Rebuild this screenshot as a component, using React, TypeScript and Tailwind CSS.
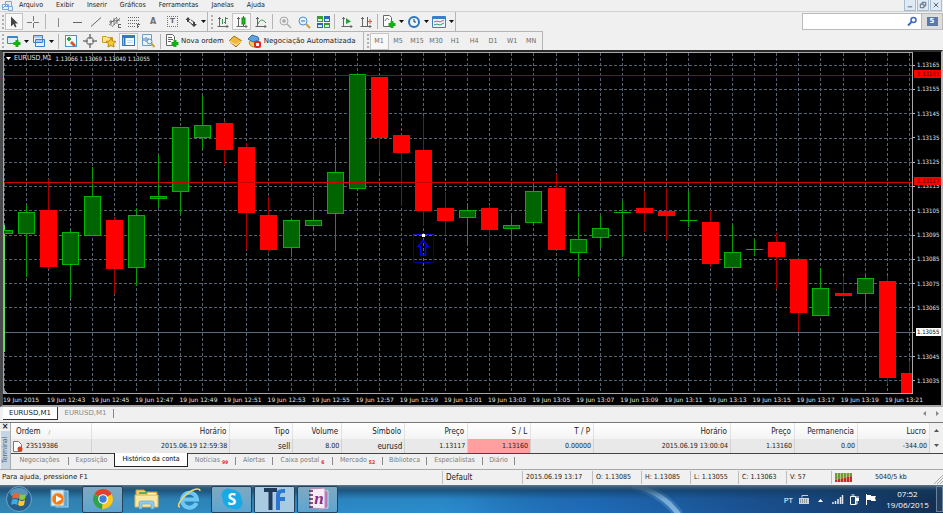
import React from "react";

type Kids = { children?: React.ReactNode };

const sans = "font-['DejaVu_Sans','Open_Sans',sans-serif]";
const narrow = "font-['DejaVu_Sans_Condensed','Open_Sans',sans-serif]";

/* ---------- toolbar pieces ---------- */

function Glyph({ children }: Kids) {
  return (
    <svg viewBox="0 0 14 14" className="h-[14px] w-[14px] shrink-0" fill="none" stroke="#666" strokeWidth="1">
      {children}
    </svg>
  );
}

function Tool({ label, w = "w-[19px]", pressed, caret, children }: Kids & { label: string; w?: string; pressed?: boolean; caret?: boolean }) {
  return (
    <button
      type="button"
      aria-label={label}
      className={`flex h-[17px] shrink-0 items-center justify-center gap-px ${w} ${pressed ? "border border-[#c4c4c4] bg-[#f8f8f8]" : ""}`}
    >
      <Glyph>{children}</Glyph>
      {caret && <Caret />}
    </button>
  );
}

function Caret() {
  return (
    <svg viewBox="0 0 5 3" className="ml-[2px] h-[3px] w-[5px] shrink-0">
      <path d="M0 0h5L2.500 3z" fill="#111" />
    </svg>
  );
}

function Sep() {
  return <span className="mx-[2px] h-[15px] w-px shrink-0 bg-[#b5b5b5]" />;
}

function Grip() {
  return <span className="mx-px h-[14px] w-[2px] shrink-0 border-l-2 border-dotted border-[#b0b0b0]" />;
}

const axes = <path d="M3.500 2v9.500M1.500 11.500h11M2 3.500h3M11 10v3" stroke="#666" />;
const plus = <path d="M10 6v7M6.500 9.500h7" stroke="#12b012" strokeWidth="3" />;

/* ---------- chart data ---------- */

type Candle = [dir: "up" | "down", high: number, top: number, bottom: number, low: number];

const candles: Candle[] = [
  ["up", 225, 230, 233, 352],
  ["up", 205, 212, 233, 277],
  ["down", 179, 210, 267, 269],
  ["up", 230, 232, 264, 298],
  ["up", 167, 196, 235, 235],
  ["down", 217, 220, 269, 294],
  ["up", 208, 215, 267, 286],
  ["up", 155, 196, 198, 208],
  ["up", 127, 127, 191, 214],
  ["up", 96, 125, 137, 149],
  ["down", 121, 123, 150, 165],
  ["down", 143, 147, 213, 250],
  ["down", 197, 215, 250, 252],
  ["up", 218, 220, 247, 257],
  ["up", 197, 220, 225, 229],
  ["up", 147, 172, 213, 248],
  ["up", 74, 74, 188, 189],
  ["down", 77, 77, 138, 173],
  ["down", 135, 135, 153, 206],
  ["down", 116, 150, 211, 226],
  ["down", 192, 208, 221, 235],
  ["up", 205, 210, 217, 244],
  ["down", 205, 208, 230, 248],
  ["up", 215, 225, 228, 240],
  ["up", 182, 191, 222, 223],
  ["down", 174, 188, 250, 250],
  ["up", 213, 239, 252, 277],
  ["up", 215, 228, 237, 248],
  ["up", 201, 212, 212, 257],
  ["down", 191, 208, 213, 232],
  ["down", 188, 211, 216, 240],
  ["up", 191, 220, 220, 227],
  ["down", 210, 222, 264, 267],
  ["up", 225, 252, 267, 267],
  ["up", 239, 249, 249, 256],
  ["down", 233, 242, 257, 289],
  ["down", 259, 259, 313, 332],
  ["up", 268, 288, 315, 316],
  ["down", 276, 293, 296, 297],
  ["up", 276, 278, 293, 309],
  ["down", 276, 281, 378, 384],
  ["down", 361, 373, 393, 393],
];

const prices = ["1.13165", "1.13155", "1.13145", "1.13135", "1.13125", "1.13115", "1.13105", "1.13095", "1.13085", "1.13075", "1.13065", "1.13055", "1.13045", "1.13035"];

const times = ["19 Jun 2015", "19 Jun 12:43", "19 Jun 12:45", "19 Jun 12:47", "19 Jun 12:49", "19 Jun 12:51", "19 Jun 12:53", "19 Jun 12:55", "19 Jun 12:57", "19 Jun 12:59", "19 Jun 13:01", "19 Jun 13:03", "19 Jun 13:05", "19 Jun 13:07", "19 Jun 13:09", "19 Jun 13:11", "19 Jun 13:13", "19 Jun 13:15", "19 Jun 13:17", "19 Jun 13:19", "19 Jun 13:21"];

const centre = (i: number) => Math.round(3.5 + i * 22.08);

function Body({ up, x, top, bottom }: { up: boolean; x: number; top: number; bottom: number }) {
  if (!up) return <rect x={x - 8} y={top} width="17" height={bottom - top} fill="#ff0000" />;
  if (top === bottom) return <rect x={x - 8} y={top} width="17" height="1" fill="#00b400" />;
  return (
    <>
      <rect x={x - 8} y={top} width="17" height={bottom - top + 1} fill="#00b400" />
      <rect x={x - 7} y={top + 1} width="15" height={bottom - top - 1} fill="#006400" />
    </>
  );
}

function Plot() {
  return (
    <svg viewBox="3 52 910 342" preserveAspectRatio="none" className="block h-full w-full" shapeRendering="crispEdges">
      <rect x="3" y="52" width="910" height="342" fill="#000" />
      <g stroke="#56626f" strokeDasharray="3 2">
        {candles.map((_, i) => (
          <line key={i} x1={centre(i) + 0.5} x2={centre(i) + 0.5} y1="53" y2="393" />
        ))}
        {prices.map((p, i) => {
          const y = Math.round(65 + i * 24.23) + 0.5;
          return <line key={p} x1="4" x2="912" y1={y} y2={y} />;
        })}
      </g>
      <path d="M4 332.500h908" stroke="#5d6c80" />
      {candles.map(([dir, high, top, bottom, low], i) => {
        const x = centre(i);
        const up = dir === "up";
        return (
          <g key={i}>
            <rect x={x} y={high} width="1" height={low - high} fill={i === 0 ? "#5fe05f" : up ? "#00a000" : "#a80000"} />
            <Body up={up} x={x} top={top} bottom={bottom} />
          </g>
        );
      })}
      <path d="M4 75.500h908" stroke="#a00000" />
      <path d="M4 182.500h908" stroke="#d00000" />
      <g fill="#0000a0">
        <rect x="413" y="234" width="1" height="28" />
        <rect x="433" y="234" width="1" height="28" />
        <rect x="413" y="262" width="21" height="1" />
        <rect x="413" y="234" width="21" height="1" fill="#1414e0" />
      </g>
      <path d="M423 240.500l5 6h-2.500v8.500h-5v-8.500H418z" fill="none" stroke="#0000ff" strokeWidth="1.500" shapeRendering="geometricPrecision" />
      <rect x="422" y="234" width="3" height="3" fill="#fff" />
      <path d="M3 389l4 4h-4z" fill="#8796ab" />
      <path d="M3 52.500h910M3.500 52v342M912.500 52v342M3 393.500h910" fill="none" stroke="#a8a8a8" />
    </svg>
  );
}

/* ---------- terminal ---------- */

const columns: [string, string][] = [
  ["Ordem", "w-[81px]"],
  ["Horário", "w-[138px]"],
  ["Tipo", "w-[63px]"],
  ["Volume", "w-[49px]"],
  ["Símbolo", "w-[63px]"],
  ["Preço", "w-[63px]"],
  ["S / L", "w-[63px]"],
  ["T / P", "w-[63px]"],
  ["Horário", "w-[137px]"],
  ["Preço", "w-[64px]"],
  ["Permanencia", "w-[63px]"],
  ["Lucro", "w-[72px]"],
];

const cells = ["2015.06.19 12:59:38", "sell", "8.00", "eurusd", "1.13117", "1.13160", "0.00000", "2015.06.19 13:00:04", "1.13160", "0.00", "-344.00"];

function SubTab({ children, count, w }: Kids & { count?: string; w: string }) {
  return (
    <button type="button" className={`flex h-[13px] shrink-0 items-center justify-between text-[#7c7c7c] ${w}`}>
      <span className="flex flex-1 items-center justify-center">
        {children}
        {count && <b className="ml-[2px] mt-[3px] text-[5px] text-[#f01818]">{count}</b>}
      </span>
      <i className="h-[8px] w-px bg-[#8a8a8a]" />
    </button>
  );
}

/* ---------- taskbar ---------- */

function TaskButton({ label, open, children, w = "w-[43px]" }: Kids & { label: string; open?: boolean; w?: string }) {
  return (
    <button type="button" aria-label={label} className={`flex h-[27px] shrink-0 items-center justify-center ${w}`}>
      <span className={`flex h-[27px] w-[41px] items-center justify-center overflow-hidden rounded-[2px] ${open ? "border border-[#24405a] bg-gradient-to-b from-[#7fa9c0] to-[#5ba5d0]" : ""}`}>
        <svg viewBox="0 0 26 26" className="h-[26px] w-[26px] overflow-visible">
          {children}
        </svg>
      </span>
    </button>
  );
}

export default function App() {
  return (
    <div className={`flex h-screen min-h-[400px] w-full flex-col overflow-hidden bg-[#f0f0f0] text-[7px] leading-[9px] text-[#222] ${sans}`}>
      {/* menu */}
      <header className="flex h-[12px] shrink-0 items-center border-b border-[#d2d2d2] pl-[2px]">
        <svg viewBox="0 0 12 10" className="h-[10px] w-[12px]" fill="#e6f0fb" stroke="#7ba6d6">
          <path d="M3.500.5h6v5h-6zM.5 3.500h6v5h-6z" />
          <path d="M6.500 5.500h4v4h-4z" />
          <path d="M1 7l2-2 1 1 2-2" fill="none" />
        </svg>
        <nav className={`flex items-center gap-[13px] pl-[5px] ${narrow}`}>
          {["Arquivo", "Exibir", "Inserir", "Gráficos", "Ferramentas", "Janelas", "Ajuda"].map((m) => (
            <button type="button" key={m}>{m}</button>
          ))}
        </nav>
        <div className="ml-auto flex gap-px pr-px">
          {["M3 7.500h5", "M4.500 5V2.500h4v4h-2M2.500 4.500h4v4h-4z", "M3 3l5 5M8 3l-5 5"].map((d, i) => (
            <button type="button" key={d} aria-label={["Minimizar", "Restaurar", "Fechar"][i]} className="h-[11px] w-[12px] border border-t-0 border-[#a9bccf] bg-[#dfeaf5]">
              <svg viewBox="0 0 11 11" className="h-[10px] w-[10px]" fill="none" stroke="#4c5d70">
                <path d={d} />
              </svg>
            </button>
          ))}
        </div>
      </header>

      {/* drawing toolbar */}
      <div className="flex h-[19px] shrink-0 items-center">
        <div className="flex h-full items-center border-r border-[#b5b5b5] pl-px">
          <Grip />
          <Tool label="Cursor" w="w-[18px]" pressed><path d="M4 1.500v10l2.500-2.500 1.500 3.500 1.500-1-1.500-3h3z" fill="#444" stroke="none" /></Tool>
          <Tool label="Cruz" w="w-[20px]"><path d="M7.500 1v12M1 7.500h13" stroke="#777" strokeDasharray="5 2" /></Tool>
          <Sep />
          <Tool label="Linha vertical"><path d="M7.500 3v9" stroke="#888" /></Tool>
          <Tool label="Linha horizontal"><path d="M3 7.500h9" /></Tool>
          <Tool label="Linha de tendência"><path d="M2 11.500l10-9" /></Tool>
          <Tool label="Canal"><path d="M1 10L9 2M4 12l8-9M3 5v6M6 3v7M9 3v6M1 7l11-2" strokeWidth=".8" /><path d="M10 9.500h3M10 12.500h3M10.500 9v4" /></Tool>
          <Tool label="Fibonacci"><path d="M1 2.500h11M1 5.500h11M1 8.500h11M1 11.500h7" strokeDasharray="1 1" /><path d="M10.500 9v4M10 9.500h3M10 11.500h2" /></Tool>
          <button type="button" className="w-[20px] text-[8px] font-bold text-[#707070]">A</button>
          <button type="button" className="flex w-[19px] justify-center text-[7px] font-bold text-[#666]"><span className="h-[11px] w-[11px] border border-dotted border-[#777]">T</span></button>
          <Tool label="Setas" w="w-[25px]" caret><path d="M4 2l2.500 3H5v2H3V5H1.500zM10 12l-3-3h2V7h2v2h2z" fill="#444" stroke="none" /><path d="M5 7l3 2M7 5l3 2" stroke="#555" /></Tool>
        </div>
        <div className="flex h-full items-center border-r border-[#b5b5b5] pl-[2px]">
          <Grip />
          <Tool label="Barras" w="w-[18px]">{axes}<path d="M6.500 4v5M9.500 2v7M9 3.500h3M8 7.500h2" stroke="#35904a" /></Tool>
          <Tool label="Velas" pressed>{axes}<path d="M8.500 1v10" stroke="#128a12" /><rect x="7" y="3" width="3" height="6" fill="#17c017" stroke="#128a12" /></Tool>
          <Tool label="Linha">{axes}<path d="M4 9c2-5 5-5 8-1" stroke="#2c9b3b" /></Tool>
          <Sep />
          <Tool label="Ampliar"><circle cx="6" cy="6" r="4" stroke="#aaa" fill="#eee" /><path d="M4 6h4M6 4v4M9 9l4 4" stroke="#aaa" strokeWidth="1.500" /></Tool>
          <Tool label="Reduzir"><circle cx="6" cy="6" r="4" stroke="#4c93cf" fill="#e5f4ff" /><path d="M4 6h4" stroke="#2874b5" /><path d="M9 9l4 4" stroke="#caa03a" strokeWidth="2" /></Tool>
          <Tool label="Lado a lado"><g stroke="none"><path d="M1 1h6v6H1zM8 8h6v5H8z" fill="#3f9a2c" /><path d="M8 1h6v6H8zM1 8h6v5H1z" fill="#2f63b5" /><path d="M2 4h4v2H2zM9 4h4v2H9zM2 10h4v2H2zM9 10h4v2H9z" fill="#d8efe0" /></g></Tool>
          <Sep />
          <Tool label="Rolagem automática">{axes}<path d="M6 3l5 3.500L6 9z" fill="#28a13b" stroke="none" /></Tool>
          <Tool label="Deslocamento">{axes}<path d="M8.500 2v9" stroke="#3567a8" /><path d="M13 6.500H9M11 4v5" stroke="#d55a3c" /></Tool>
          <Sep />
          <Tool label="Indicadores" w="w-[25px]" caret><path d="M1.500.5h6l2 2v9h-8z" fill="#fff" /><path d="M3 6c1-3 3-3 4-1" />{plus}</Tool>
          <Tool label="Períodos" w="w-[25px]" caret><circle cx="7" cy="7" r="5" fill="#eaf5ff" stroke="#2b74bf" strokeWidth="2" /><path d="M7 4v3h2" stroke="#234" /></Tool>
          <Tool label="Modelos" w="w-[25px]" caret><path d="M.5 1.500h13v11H.5z" fill="#eef6ff" stroke="#3e7fc2" /><path d="M1 3h12" stroke="#3e7fc2" strokeWidth="2" /><path d="M2 7l3-1 3 1 4-2" stroke="#c55" /><path d="M2 10l3-1 3 1 4-2" stroke="#396" /></Tool>
        </div>
        <div className="ml-auto flex h-[17px] border border-[#bbb] bg-white">
          <div className="flex items-center">
            <input type="text" aria-label="Pesquisar" className="h-full w-[104px] bg-white px-1 outline-none" />
            <svg viewBox="0 0 11 11" className="mr-[3px] h-[11px] w-[11px]" fill="none" stroke="#3f69c4" strokeWidth="2">
              <circle cx="6.500" cy="4" r="2.500" strokeWidth="1.500" />
              <path d="M4.500 6L1 9.500" />
            </svg>
          </div>
          <button type="button" className="flex w-[21px] items-center justify-center border-l border-[#bbb] bg-[#dcdcdc]">
            <span className="h-[9px] w-[11px] bg-[#5b78ad] text-center text-[7px] font-bold text-white">5</span>
          </button>
        </div>
      </div>

      {/* standard toolbar */}
      <div className="flex h-[19px] shrink-0 items-center">
        <div className="flex h-full items-center border-r border-t border-[#b5b5b5] pl-px">
          <Grip />
          <Tool label="Novo gráfico" w="w-[25px]" caret><path d="M.5 2.500h10v7H.5z" fill="#dcefff" stroke="#3e86c8" /><path d="M1 3.500h9" stroke="#3e86c8" />{plus}</Tool>
          <Tool label="Perfis" w="w-[26px]" caret><path d="M1.500 1.500h9v7h-9zM3.500 5.500h9v7h-9z" fill="#e4f1ff" stroke="#3e7fc2" /><path d="M2 3h8M4 7h8" stroke="#6fa7dc" /></Tool>
          <Sep />
          <Tool label="Observação do mercado"><rect x="1.500" y="1.500" width="11" height="11" fill="#f3faff" stroke="#4b93cf" /><path d="M3 5h4M5 3v4" stroke="#2aa44a" strokeWidth="2" /><path d="M7 8l4 4" stroke="#e2502d" strokeWidth="3" /></Tool>
          <Tool label="Janela de dados"><circle cx="7" cy="7" r="3.500" stroke="#888" strokeWidth="1.500" /><path d="M7 0v5M7 9v5M0 7h5M9 7h5" stroke="#777" strokeWidth="1.500" /></Tool>
          <Tool label="Navegador" w="w-[20px]"><path d="M.5 2.500h4l1 1h5v5H.5z" fill="#ffe58a" stroke="#c99a25" /><path d="M9 4l1.500 3 3.500.5-2.500 2.200.6 3.300L9 11.500 5.900 13l.6-3.300L4 7.500 7.500 7z" fill="#f7c832" stroke="#b98612" /></Tool>
          <Tool label="Terminal" w="w-[19px]" pressed><rect x=".5" y="1.500" width="12" height="10" fill="#fff" stroke="#3578bd" /><path d="M1 3h12M2.500 4v7" stroke="#3578bd" strokeWidth="2" /><path d="M5 6.500h6M5 8.500h6" stroke="#d0dbe8" /></Tool>
          <Tool label="Testador" w="w-[20px]"><path d="M1.500.5h9v11h-9z" fill="#eef6fd" stroke="#6a9bc9" /><path d="M3 7V4M5 8V3M7 7V4" stroke="#4877a8" /><circle cx="8.500" cy="7.500" r="2.500" fill="#dff1ff" stroke="#5c8db8" /><path d="M10.500 9.500l3 3.500" stroke="#d2a040" strokeWidth="2" /></Tool>
          <Sep />
          <button type="button" className="flex items-center gap-[2px] pl-[2px] text-[#222]">
            <Glyph><path d="M1.500.5h6l2 2v9h-8z" fill="#fff" /><path d="M3 3.500h4M3 5.500h5M3 7.500h3" />{plus}</Glyph>
            Nova ordem
          </button>
          <Tool label="MetaEditor" w="w-[23px]"><path d="M1 7l5-5 8 5-6 6z" fill="#efb73e" stroke="#a8741a" /><path d="M1 7l7 4 6-4" stroke="#fff0ba" /></Tool>
          <button type="button" className="flex items-center gap-[3px] pr-[7px] text-[#222]">
            <Glyph><path d="M2 8c1-2 8-2 9 0l-1 4-4 1-3-2z" fill="#f4cf58" stroke="#b98b26" /><path d="M1 5l4-4 6 2 1 3-6 2z" fill="#5da3dc" stroke="#3470a8" /><rect x="7" y="7" width="7" height="7" rx="2" fill="#dd2b1c" stroke="none" /><rect x="9" y="9" width="3" height="3" fill="#fff" stroke="none" /></Glyph>
            Negociação Automatizada
          </button>
        </div>
        <div className={`flex h-full items-center border-r border-t border-[#b5b5b5] pl-[2px] pr-px text-[#686868] ${narrow}`}>
          <Grip />
          {["M1", "M5", "M15", "M30", "H1", "H4", "D1", "W1", "MN"].map((t, i) => (
            <button type="button" key={t} className={`h-[17px] w-[19px] text-[7px] ${i === 0 ? "border border-[#c4c4c4] bg-[#f8f8f8]" : ""}`}>{t}</button>
          ))}
        </div>
      </div>

      {/* chart window */}
      <main className="flex min-h-0 flex-1 flex-col border-b-2 border-l-[3px] border-r-2 border-t-2 border-b-[#a5a5a5] border-l-[#4a4a4a] border-r-[#b8b8b8] border-t-[#2c2c2c] bg-black text-[#e4e4e4]">
        <div className="flex min-h-0 flex-1">
          <div className="relative min-w-0 flex-1">
            <Plot />
            <p className={`absolute left-[3px] top-[2px] flex items-center whitespace-pre ${narrow}`}>
              <svg viewBox="0 0 5 3" className="mr-[3px] h-[3px] w-[5px]"><path d="M0 0h5L2.500 3z" fill="#fff" /></svg>
              EURUSD,M1 <span className="text-[6px]"> 1.13066 1.13069 1.13040 1.13055</span>
            </p>
          </div>
          <div className={`relative flex w-[28px] shrink-0 flex-col justify-between pb-[9px] pt-[9px] text-[6px] leading-[8px] ${narrow}`}>
            {prices.map((p) => (
              <span key={p} className="flex items-center gap-px">
                <i className="h-px w-[2px] bg-[#bbb]" />
                <span className={p === "1.13055" ? "flex-1 bg-white pl-px text-black" : "pl-px"}>{p}</span>
              </span>
            ))}
            <span className="absolute left-px right-0 top-[5.400%] bg-[#ff0000] pl-[3px] text-[#5c0000]">1.13161</span>
            <span className="absolute left-px right-0 top-[36.500%] bg-[#ff0000] pl-[3px] text-[#5c0000]">1.13117</span>
          </div>
        </div>
        <div className="flex h-[11px] shrink-0 items-center pr-[12px] text-[6px]">
          {times.map((t) => (
            <span key={t} className="min-w-0 flex-1 whitespace-nowrap">{t}</span>
          ))}
        </div>
      </main>

      {/* chart tabs */}
      <div className="flex h-[16px] shrink-0 items-start border-b border-[#777] pl-[3px]">
        <button type="button" className="h-[13px] w-[55px] border-b border-r border-[#333] bg-white">EURUSD,M1</button>
        <button type="button" className="mt-[2px] w-[56px] border-r border-[#888] text-[#888]">EURUSD,M1</button>
        <span className="ml-auto flex gap-[8px] pr-[4px] pt-[4px]">
          <svg viewBox="0 0 4 5" className="h-[5px] w-[4px]"><path d="M3 0v5L0 2.500z" fill="#888" /></svg>
          <svg viewBox="0 0 4 5" className="h-[5px] w-[4px]"><path d="M1 0v5l3-2.500z" fill="#888" /></svg>
        </span>
      </div>

      {/* terminal */}
      <section className="flex h-[47px] shrink-0 border-b border-[#a8a8a8]">
        <div className="flex w-[11px] shrink-0 flex-col items-center border-r border-[#aaa]">
          <button type="button" aria-label="Fechar terminal" className="h-[8px] text-[8px] leading-[8px] font-bold">×</button>
          <span className={`flex w-[9px] flex-1 rotate-180 items-center justify-center bg-[#c6d5e4] text-[7px] text-[#53677c] [writing-mode:vertical-rl] ${narrow}`}>Terminal</span>
        </div>
        <div className="min-w-0 flex-1">
          <div className="flex border-b border-[#444]">
            <table className={`min-w-0 flex-1 table-fixed border-collapse text-right ${narrow}`}>
              <thead>
                <tr className="h-[16px] bg-gradient-to-b from-white to-[#f4f4f5] text-[8px]">
                  {columns.map(([name, w], i) => (
                    <th key={i} scope="col" className={`border-r border-[#e2e2e2] font-normal ${w} ${i === 0 ? "pl-[5px] text-left" : "pr-[3px]"}`}>
                      {name}
                      {i === 0 && <span className="pl-[8px] text-[6px] text-[#888]">/</span>}
                    </th>
                  ))}
                </tr>
              </thead>
              <tbody>
                <tr className="h-[14px] bg-[#e9e9e9]">
                  <td className="border-r border-[#d2d2d2] text-left">
                    <span className="flex items-center gap-[3px] pl-[2px]">
                      <svg viewBox="0 0 10 11" className="h-[11px] w-[10px]">
                        <path d="M.5.5h5l3 3v7h-8z" fill="#fff" stroke="#777" />
                        <circle cx="7" cy="8" r="2.500" fill="#d8401c" />
                      </svg>
                      23519386
                    </span>
                  </td>
                  {cells.map((c, i) => (
                    <td key={i} className={`border-r border-[#d2d2d2] pr-[2px] ${i === 5 ? "bg-[#ff9f9f]" : ""} ${/^[a-z]/.test(c) ? "text-[8px]" : ""}`}>{c}</td>
                  ))}
                </tr>
              </tbody>
            </table>
            <div className="flex w-[13px] shrink-0 flex-col items-center justify-between py-[6px]">
              <svg viewBox="0 0 5 3" className="h-[3px] w-[5px]"><path d="M0 3h5L2.500 0z" fill="#555" /></svg>
              <svg viewBox="0 0 5 3" className="h-[3px] w-[5px]"><path d="M0 0h5L2.500 3z" fill="#555" /></svg>
            </div>
          </div>
          <div className={`flex items-start ${narrow}`}>
            <SubTab w="w-[58px]">Negociações</SubTab>
            <button type="button" className="h-[13px] w-[45px] text-[#7c7c7c]">Exposição</button>
            <button type="button" className="-mt-px h-[14px] w-[74px] border border-t-0 border-[#222] bg-white text-black">Histórico da conta</button>
            <SubTab w="w-[48px]" count="99">Notícias</SubTab>
            <SubTab w="w-[37px]">Alertas</SubTab>
            <SubTab w="w-[60px]" count="6">Caixa postal</SubTab>
            <SubTab w="w-[50px]" count="52">Mercado</SubTab>
            <SubTab w="w-[44px]">Biblioteca</SubTab>
            <SubTab w="w-[56px]">Especialistas</SubTab>
            <SubTab w="w-[32px]">Diário</SubTab>
          </div>
        </div>
      </section>

      {/* status bar */}
      <footer className={`flex h-[15px] shrink-0 items-center ${narrow}`}>
        <span className={`flex-1 pl-[2px] ${sans}`}>Para ajuda, pressione F1</span>
        {[
          ["Default", "w-[80px] text-[8px]"],
          ["2015.06.19 13:17", "w-[70px]"],
          ["O: 1.13085", "w-[49px]"],
          ["H: 1.13085", "w-[49px]"],
          ["L: 1.13055", "w-[48px]"],
          ["C: 1.13063", "w-[48px]"],
          ["V: 57", "w-[45px]"],
        ].map(([t, w]) => (
          <span key={t} className={`flex h-[13px] items-center whitespace-nowrap border-l border-[#bdbdbd] pl-[3px] ${w}`}>{t}</span>
        ))}
        <span className="flex h-[13px] w-[112px] items-center border-l border-[#bdbdbd] pl-[3px]">
          <svg viewBox="0 0 17 9" className="mr-[23px] h-[9px] w-[17px]">
            <path d="M0 0h17v3L0 7z" fill="#6f9a35" />
            <path d="M17 3v6H0V7z" fill="#c22a22" />
            <path d="M2.500 0v9M5.500 0v9M8.500 0v9M11.500 0v9M14.500 0v9" stroke="#e6e0c8" strokeWidth=".6" />
          </svg>
          5040/5 kb
          <svg viewBox="0 0 9 9" className="ml-auto mt-[3px] h-[9px] w-[9px]"><path d="M0 9l9-9M3 9l6-6M6 9l3-3" stroke="#aaa" /></svg>
        </span>
      </footer>

      {/* taskbar */}
      <div className="relative flex h-[28px] shrink-0 items-center overflow-hidden bg-gradient-to-r from-[#3386b4] via-[#2b8ed0] to-[#14365f]">
        <svg viewBox="0 0 943 28" preserveAspectRatio="none" className="absolute inset-0 h-full w-full">
          <defs>
            <linearGradient id="shade" x1="0" y1="0" x2="0" y2="1">
              <stop offset="0" stopColor="#5f7a90" />
              <stop offset=".08" stopColor="#3c5870" stopOpacity=".9" />
              <stop offset=".2" stopColor="#123a5c" stopOpacity=".65" />
              <stop offset=".5" stopColor="#123a5c" stopOpacity=".1" />
              <stop offset="1" stopColor="#123a5c" stopOpacity="0" />
            </linearGradient>
            <linearGradient id="night" x1="0" y1="0" x2="1" y2="0">
              <stop offset="0" stopColor="#1f6cba" stopOpacity="0" />
              <stop offset=".3" stopColor="#1f6cba" />
              <stop offset=".7" stopColor="#194b88" />
              <stop offset="1" stopColor="#122d50" />
            </linearGradient>
          </defs>
          <rect x="440" width="503" height="28" fill="url(#night)" />
          <path d="M633 0q30 7 46 30" fill="none" stroke="#6fb4ea" strokeWidth="10" opacity=".3" />
          <path d="M633 0q30 7 46 30" fill="none" stroke="#b4dcf6" strokeWidth="5" opacity=".6" />
          <rect width="943" height="28" fill="url(#shade)" />
        </svg>
        <div className="relative flex w-full items-center">
          <TaskButton label="Iniciar" w="w-[38px]">
            <circle cx="13" cy="13" r="12.500" fill="#265f8c" stroke="#7bb4d8" strokeWidth=".8" />
            <ellipse cx="13" cy="7" rx="9" ry="5" fill="#8cc3e2" opacity=".5" />
            <path d="M7 8q3-2 6 0l-1 5q-3-2-6 0z" fill="#f0642a" />
            <path d="M14 8q3 2 6 0l-1 5q-3 2-6 0z" fill="#8dc63f" />
            <path d="M6 14q3-2 6 0l-1 5q-3-2-6 0z" fill="#3fa9e8" />
            <path d="M13 14q3 2 6 0l-1 5q-3 2-6 0z" fill="#fcc92c" />
          </TaskButton>
          <TaskButton label="Media Player">
            <rect x="9" y="5" width="12" height="16" fill="#5ba7d8" stroke="#a6d3ee" />
            <rect x="4" y="4" width="13" height="16" fill="#d9ecf7" stroke="#77b0d6" />
            <circle cx="11" cy="13" r="6" fill="#f07b1a" stroke="#fbb263" />
            <path d="M9 9.500l6 3.500-6 3.500z" fill="#fff" />
          </TaskButton>
          <TaskButton label="Chrome" open>
            <circle cx="13" cy="13" r="10" fill="#fbc91c" />
            <path d="M13 13L4.300 8A10 10 0 0 1 21.700 8z" fill="#e0402f" />
            <path d="M13 13l-8.700-5A10 10 0 0 0 12 23z" fill="#2fa24c" />
            <circle cx="13" cy="13" r="4.800" fill="#fff" />
            <circle cx="13" cy="13" r="3.700" fill="#3d7edb" />
          </TaskButton>
          <TaskButton label="Pastas">
            <path d="M3 4h8l2 2h11v14H3z" fill="#f2cf70" stroke="#c39a3c" />
            <path d="M6 6h8v2H6z" fill="#5aaf5a" /><path d="M15 7h8v2h-8z" fill="#fff8d8" />
            <path d="M2 9h23v12H2z" fill="#fae7a4" stroke="#d6b45a" />
            <path d="M6 23v-6q0-2 2-2h11q2 0 2 2v6h-3v-5h-9v5z" fill="#8fcdf0" stroke="#5a9cc8" strokeWidth=".6" />
          </TaskButton>
          <TaskButton label="Internet Explorer">
            <path d="M20.500 17A7.500 7.500 0 1 1 21 13.500H7.500" fill="none" stroke="#6cc8f4" strokeWidth="4" />
            <path d="M4 21C0 21 5 12 12 7s12-5 12-2" fill="none" stroke="#f3d56a" strokeWidth="1.500" />
          </TaskButton>
          <TaskButton label="Skype" open>
            <circle cx="9" cy="9" r="6.500" fill="#19a9e5" /><circle cx="17" cy="17" r="6.500" fill="#19a9e5" /><circle cx="13" cy="13" r="9.500" fill="#19a9e5" />
            <text x="13" y="19" textAnchor="middle" fontSize="16" fontWeight="700" fontFamily="Open Sans, sans-serif" fill="#fff">S</text>
          </TaskButton>
          <TaskButton label="TF" open>
            <rect x="-8" y="-1" width="42" height="28" fill="#a9cbe2" />
            <path d="M2 2h13v4h-4.500v18H6.500V6H2z" fill="#203a5c" />
            <path d="M14 24V9q0-7 9-6v4q-5-1-5 3v1h5v4h-5v9z" fill="#2d76cf" />
          </TaskButton>
          <TaskButton label="OneNote" open>
            <path d="M14 4l9 1v17l-9 1z" fill="#b676b3" stroke="#fff" strokeWidth=".6" />
            <path d="M5 3l15-1v21L5 22z" fill="#f6ecf6" stroke="#b78ab6" />
            <path d="M4 5h4M4 9h4M4 13h4M4 17h4M4 21h4" stroke="#4f2950" strokeWidth="1.500" />
            <text x="14" y="18" textAnchor="middle" fontSize="17" fontStyle="italic" fontWeight="700" fontFamily="Liberation Serif, serif" fill="#8a2d86">n</text>
          </TaskButton>
          <div className="ml-auto flex items-center text-[8px] leading-[11px] text-white font-['Open_Sans',sans-serif]">
            <span>PT</span>
            <svg viewBox="0 0 82 12" className="ml-[5px] h-[12px] w-[82px]">
              <path d="M1 5h10v6H1z" fill="#cfd4d8" /><path d="M2 7h8M2 9h8" stroke="#56606a" strokeDasharray="1 1" /><path d="M4 4.500V2.500h6" fill="none" stroke="#ccc" />
              <path d="M20 9h5l-2.500-3z" fill="#fff" />
              <path d="M35 11V9M37.500 11V8M40 11V6M42.500 11V4M44.500 11V2" stroke="#e4e8ec" strokeWidth="1.500" />
              <path d="M52.500 3.500h5v8h-5z" fill="none" stroke="#fff" /><path d="M53.500 2h3" stroke="#fff" /><path d="M57 5h4v3h-4z" fill="#fff" /><path d="M58 3v2M60 3v2M59 8v3h-2" fill="none" stroke="#fff" />
              <path d="M68.500 1v11" stroke="#fff" /><path d="M69 2h4v1h5l-1 2 1 3h-5V7h-4z" fill="#fff" />
            </svg>
            <div className="w-[55px] text-center">
              <div>07:52</div>
              <div>19/06/2015</div>
            </div>
            <button type="button" aria-label="Mostrar área de trabalho" className="ml-[1px] h-[26px] w-[7px] border border-[#6b829a] bg-[#2b4a6c]/60" />
          </div>
        </div>
      </div>
    </div>
  );
}
